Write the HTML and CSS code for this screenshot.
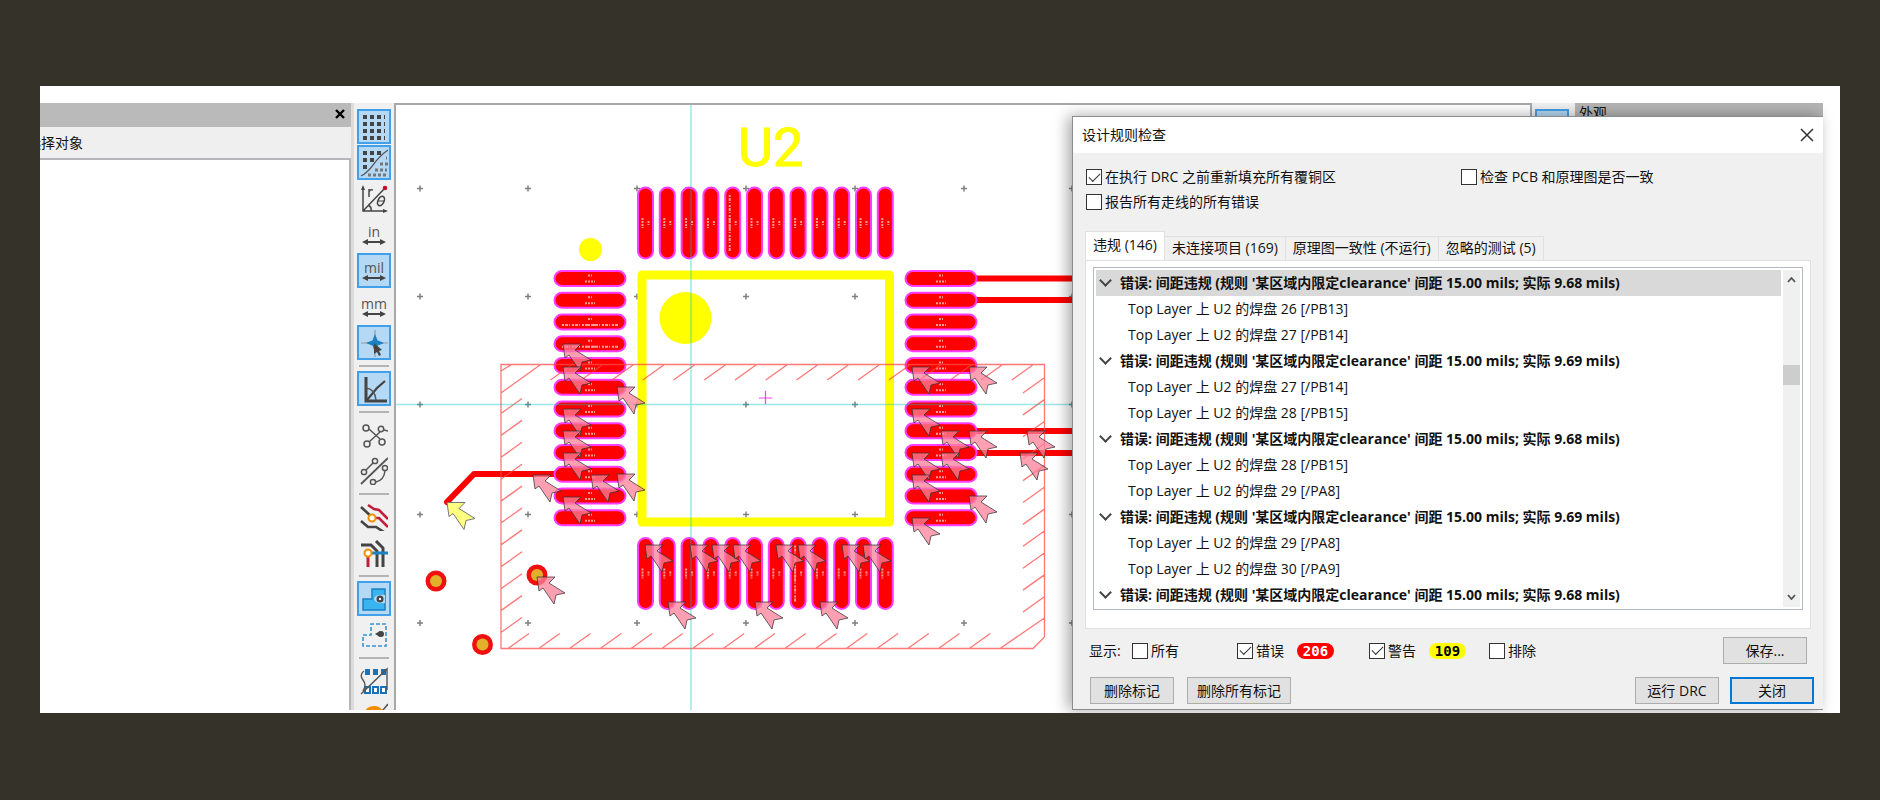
FILE: index.html
```html
<!DOCTYPE html>
<html lang="zh-CN">
<head>
<meta charset="utf-8">
<title>设计规则检查</title>
<link rel="stylesheet" href="styles.css">
</head>
<body>
<main class="window">
  <aside class="panel">
    <header class="panel-head">
      <button class="panel-close" aria-label="关闭面板"><svg width="10" height="10" viewBox="0 0 10 10"><path d="M1 1l8 8M9 1l-8 8" stroke="#000" stroke-width="2.4"/></svg></button>
    </header>
    <div class="panel-sub"><span>选择对象</span></div>
    <div class="panel-list"></div>
  </aside>

  <nav class="toolbar" aria-label="工具">
    <button class="tool on" aria-label="网格"><svg viewBox="0 0 28 28"><path d="M3 4h22M3 11h22M3 18h22M3 25h22" stroke="#444" stroke-width="4" stroke-dasharray="4 3"/></svg></button>
    <button class="tool on" aria-label="网格覆盖"><svg viewBox="0 0 28 28"><path d="M3 4h19M3 11h12M3 18h5" stroke="#444" stroke-width="4" stroke-dasharray="4 3"/><path d="M26 9h1M20 15h8M15 21h12M8 26h20" stroke="#777" stroke-width="3" stroke-dasharray="3 2"/><path d="M1 27C14 20 12 12 28 1" fill="none" stroke="#555" stroke-width="1.3"/></svg></button>
    <button class="tool" aria-label="极坐标"><svg viewBox="0 0 28 28"><path d="M3 2v24h23M3 26L25 3M8 20q4 2 3 6" fill="none" stroke="#444" stroke-width="1.5"/><path d="M3 0l2 5H1zM28 26l-5-2v4z" fill="#444"/><path d="M9 12V4M9 7q1-3 4-2" fill="none" stroke="#555" stroke-width="1.6"/><ellipse cx="21" cy="16" rx="3" ry="5" transform="rotate(25 21 16)" fill="none" stroke="#444" stroke-width="1.6"/><path d="M18 16h6" stroke="#444"/><circle cx="25" cy="3" r="2.3" fill="#c8102e"/></svg></button>
    <button class="tool" aria-label="英寸"><span class="unit">in</span><svg class="arrow" viewBox="0 0 24 6"><path d="M3 3h18" stroke="#444" stroke-width="2"/><path d="M0 3l6-3v6zM24 3l-6-3v6z" fill="#444"/></svg></button>
    <button class="tool on" aria-label="密耳"><span class="unit">mil</span><svg class="arrow" viewBox="0 0 24 6"><path d="M3 3h18" stroke="#444" stroke-width="2"/><path d="M0 3l6-3v6zM24 3l-6-3v6z" fill="#444"/></svg></button>
    <button class="tool" aria-label="毫米"><span class="unit">mm</span><svg class="arrow" viewBox="0 0 24 6"><path d="M3 3h18" stroke="#444" stroke-width="2"/><path d="M0 3l6-3v6zM24 3l-6-3v6z" fill="#444"/></svg></button>
    <button class="tool on" aria-label="光标"><svg viewBox="0 0 28 28"><path d="M1 14h27M15 1v27" stroke="#999" stroke-width="1.2"/><path d="M15 7l2 5 5 2-5 2-2 5-2-5-5-2 5-2z" fill="#1a81c4" stroke="#1a81c4" stroke-width="1.5"/><path d="M14 14l8 7-3 1 2 4-2 1-2-4-3 2z" fill="#444"/></svg></button>
    <hr class="sep">
    <button class="tool on" aria-label="角度限制"><svg viewBox="0 0 28 28"><path d="M6 2v24h21" fill="none" stroke="#444" stroke-width="3"/><path d="M7 25L17 13l8-7" fill="none" stroke="#444" stroke-width="2.2"/><path d="M6 13q9 1 10 12" fill="none" stroke="#555" stroke-width="1.4"/></svg></button>
    <hr class="sep">
    <button class="tool" aria-label="飞线"><svg viewBox="0 0 28 28" fill="none" stroke="#555" stroke-width="1.5"><circle cx="6" cy="7" r="3"/><circle cx="21" cy="8" r="2.7"/><circle cx="7" cy="23" r="3"/><circle cx="22" cy="21" r="3"/><path d="M9 8l11 10M9 21L20 11M24 9l4 1"/></svg></button>
    <button class="tool" aria-label="弯曲飞线"><svg viewBox="0 0 28 28" fill="none" stroke="#555" stroke-width="1.5"><path d="M1 27L28 1" stroke-width="1.8"/><circle cx="15" cy="4" r="2.6"/><circle cx="4" cy="15" r="2.6"/><path d="M6 13l7-7M16 25q8-2 9-11"/><circle cx="13" cy="25" r="2.6"/><circle cx="25" cy="11" r="2.6"/></svg></button>
    <hr class="sep">
    <button class="tool" aria-label="高亮网络"><svg viewBox="0 0 28 28" fill="none" stroke-width="2.6"><path d="M1 4l12 11M1 18l7 6h8l8 5" stroke="#444"/><path d="M8 2l6 4 5 1 9 9M13 15h6l9 9" stroke="#c0203c"/><circle cx="12" cy="15" r="3.5" fill="#fff" stroke="#f29100" stroke-width="2"/></svg></button>
    <button class="tool" aria-label="网络颜色"><svg viewBox="0 0 28 28" fill="none" stroke-width="3"><path d="M1 6h10l6 6v16M16 2l7 7v19" stroke="#444"/><path d="M9 14h19" stroke="#1a81c4"/><path d="M8 16v12" stroke="#c0203c"/><circle cx="8" cy="14" r="3.5" fill="#fff" stroke="#f29100" stroke-width="2"/></svg></button>
    <hr class="sep">
    <button class="tool on" aria-label="填充覆铜"><svg viewBox="0 0 28 28"><path d="M3 14h9V4h13v21H3z" fill="#39b4ee" stroke="#1a81c4" stroke-width="1.5"/><path d="M14 14q1-5 11-4v8q-10 1-11-4" fill="#b5daf5"/><circle cx="20" cy="14" r="3.5" fill="#444"/><circle cx="20" cy="14" r="1.2" fill="#fff"/></svg></button>
    <button class="tool" aria-label="覆铜轮廓"><svg viewBox="0 0 28 28"><path d="M3 14h8V3h15v22H3z" fill="none" stroke="#3994cf" stroke-width="1.6" stroke-dasharray="4 2"/><path d="M15 13l5-3v6z" fill="#444"/><circle cx="21" cy="13" r="3" fill="#444"/></svg></button>
    <hr class="sep">
    <button class="tool" aria-label="焊盘"><svg viewBox="0 0 28 28"><path d="M5 2h5v6H5zM13 2h5v6h-5zM21 2h5v6h-5z" fill="#1a72b8"/><path d="M5 20h5v6H5zM13 20h5v6h-5zM21 20h5v6h-5z" fill="#fff" stroke="#1a72b8" stroke-width="2"/><path d="M1 27L27 2v21M4 4q-5 4-1 9t0 11" fill="none" stroke="#555" stroke-width="1.4"/></svg></button>
    <button class="tool" aria-label="过孔"><svg viewBox="0 0 28 28"><circle cx="14" cy="14" r="11" fill="#f28c00"/><path d="M18 13L28 1" stroke="#555" stroke-width="1.5"/></svg></button>
  </nav>

  <section class="canvas" aria-label="PCB">
    <svg id="board" width="100%" height="100%">
      <defs>
        <path id="marker" d="M0 0L18 0 12 6 28 16 19 18 17 27 6 11 2 14Z" stroke-width="1"/>
        <g id="pad">
          <rect x="-35.5" y="-7.5" width="71" height="15" rx="7.5" fill="#f00" stroke="#ff3cff" stroke-width="2"/>
          <path d="M-2 -3h4M-5 3h10" stroke="#ff9a9a" stroke-width="2" stroke-dasharray="2 1"/>
        </g>
        <g id="pad-long">
          <use href="#pad"/>
          <path d="M-28 3h56" stroke="#ff9a9a" stroke-width="2" stroke-dasharray="2 1 3 1 1 2"/>
        </g>
        <path id="tick" d="M-3 0h6M0 -3v6" stroke="#808080" stroke-width="1.5"/>
        <g id="via"><circle r="10.5" fill="#f01010"/><circle r="6" fill="#e2b12c"/></g>
      </defs>
      <g transform="translate(-396 -105)">
        <g id="ticks"></g>
        <g fill="none" stroke="#f00" stroke-width="6" stroke-linecap="round" stroke-linejoin="round">
          <path d="M447 502L474 474H580M960 278.5H1080M960 300H1080M960 431H1080M960 453H1080"/>
        </g>
        <g id="pads"></g>
        <rect x="642" y="275" width="247.5" height="247" fill="none" stroke="#ff0" stroke-width="9" stroke-linejoin="round"/>
        <circle cx="685.5" cy="318" r="26" fill="#ff0"/>
        <circle cx="590.5" cy="249.5" r="11.5" fill="#ff0"/>
        <text class="refdes" x="738" y="166">U2</text>
        <use href="#via" x="436" y="581"/><use href="#via" x="482.5" y="644.5"/><use href="#via" x="537" y="575"/>
        <path id="zone" fill="none" stroke="#ff4a4a" stroke-opacity=".75" stroke-width="1.3"/>
        <path d="M691 105V720M396 404.5H1100" stroke="#00c4c4" stroke-opacity=".4" stroke-width="1.5"/>
        <path d="M759 398h13M765.5 391v13" stroke="#ff3cff" stroke-width="1.2"/>
        <g id="markers" fill="#ff8098" fill-opacity=".75" stroke="#333" stroke-opacity=".75"></g>
        <use href="#marker" x="447" y="502.5" fill="#ffff80" stroke="#777"/>
      </g>
    </svg>
  </section>

  <div class="toolbar right"><div class="tool on"></div></div>
  <aside class="appearance"><span>外观</span></aside>

  <section class="dialog" role="dialog" aria-labelledby="dlg-title">
    <header class="title-bar">
      <h1 id="dlg-title">设计规则检查</h1>
      <button class="dlg-close" aria-label="关闭对话框"><svg width="14" height="14" viewBox="0 0 14 14"><path d="M1 1l12 12M13 1L1 13" stroke="#333" stroke-width="1.5"/></svg></button>
    </header>
    <div class="options">
      <label class="check"><input type="checkbox" checked>在执行 DRC 之前重新填充所有覆铜区</label>
      <label class="check"><input type="checkbox">检查 PCB 和原理图是否一致</label>
      <label class="check"><input type="checkbox">报告所有走线的所有错误</label>
    </div>
    <div class="tabs" role="tablist">
      <button class="tab active" role="tab">违规 (146)</button>
      <button class="tab" role="tab">未连接项目 (169)</button>
      <button class="tab" role="tab">原理图一致性 (不运行)</button>
      <button class="tab" role="tab">忽略的测试 (5)</button>
    </div>
    <div class="page">
      <div class="list">
        <ul class="rows">
          <li class="row head selected">错误: 间距违规 (规则 '某区域内限定clearance' 间距 15.00 mils; 实际 9.68 mils)</li>
          <li class="row">Top Layer 上 U2 的焊盘 26 [/PB13]</li>
          <li class="row">Top Layer 上 U2 的焊盘 27 [/PB14]</li>
          <li class="row head">错误: 间距违规 (规则 '某区域内限定clearance' 间距 15.00 mils; 实际 9.69 mils)</li>
          <li class="row">Top Layer 上 U2 的焊盘 27 [/PB14]</li>
          <li class="row">Top Layer 上 U2 的焊盘 28 [/PB15]</li>
          <li class="row head">错误: 间距违规 (规则 '某区域内限定clearance' 间距 15.00 mils; 实际 9.68 mils)</li>
          <li class="row">Top Layer 上 U2 的焊盘 28 [/PB15]</li>
          <li class="row">Top Layer 上 U2 的焊盘 29 [/PA8]</li>
          <li class="row head">错误: 间距违规 (规则 '某区域内限定clearance' 间距 15.00 mils; 实际 9.69 mils)</li>
          <li class="row">Top Layer 上 U2 的焊盘 29 [/PA8]</li>
          <li class="row">Top Layer 上 U2 的焊盘 30 [/PA9]</li>
          <li class="row head">错误: 间距违规 (规则 '某区域内限定clearance' 间距 15.00 mils; 实际 9.68 mils)</li>
        </ul>
        <div class="scrollbar">
          <button aria-label="向上滚动"><svg width="9" height="6" viewBox="0 0 9 6"><path d="M1 5l3.5-4L8 5" fill="none" stroke="#555" stroke-width="1.8"/></svg></button>
          <div class="track"><div class="thumb"></div></div>
          <button aria-label="向下滚动"><svg width="9" height="6" viewBox="0 0 9 6"><path d="M1 1l3.5 4L8 1" fill="none" stroke="#555" stroke-width="1.8"/></svg></button>
        </div>
      </div>
    </div>
    <div class="filters">
      <span>显示:</span>
      <div><label class="check"><input type="checkbox">所有</label></div>
      <div><label class="check"><input type="checkbox" checked>错误</label><span class="badge red">206</span></div>
      <div><label class="check"><input type="checkbox" checked>警告</label><span class="badge yellow">109</span></div>
      <div><label class="check"><input type="checkbox">排除</label></div>
      <button class="btn">保存...</button>
    </div>
    <footer class="actions">
      <button class="btn">删除标记</button>
      <button class="btn wide">删除所有标记</button>
      <button class="btn run">运行 DRC</button>
      <button class="btn primary">关闭</button>
    </footer>
  </section>
</main>
<script src="board.js"></script>
</body>
</html>
```

FILE: styles.css
```css
* { box-sizing: border-box; }
body {
  margin: 0;
  height: 100vh;
  min-height: 640px;
  padding: 86px 40px 87px;
  background: #35322a;
  color: #111;
  font: 14px/20px "Open Sans", "Noto Sans CJK SC", sans-serif;
}
button, input { font: inherit; color: inherit; margin: 0; }
button { padding: 0; border: 0; background: none; }

.window {
  display: grid;
  grid-template: minmax(0, 1fr) / 311px 43px minmax(0, 1fr) 43px 248px;
  height: 100%;
  padding: 17px 17px 3px 0;
  background: #fff;
  overflow: hidden;
}

/* left panel */
.panel {
  grid-area: 1 / 1;
  display: flex;
  flex-direction: column;
  background: #efefef;
}
.panel-head {
  display: flex;
  align-items: center;
  justify-content: flex-end;
  height: 24px;
  padding: 0 6px 2px;
  background: #bababa;
}
.panel-close { display: flex; }
.panel-sub {
  display: flex;
  height: 31px;
  align-items: center;
  overflow: hidden;
}
.panel-sub span { margin-left: -13px; }
.panel-list {
  flex: 1;
  border: solid #b4b6ba;
  border-width: 2px 2px 0 0;
  background: #fff;
}

/* tool strips */
.toolbar {
  grid-area: 1 / 2;
  display: flex;
  flex-direction: column;
  align-items: center;
  gap: 1px;
  padding: 6px 0 0;
  border-left: 3px solid #dcdcdc;
  background: #f0f0f0;
  overflow: hidden;
}
.toolbar.right { grid-area: 1 / 4; border-left: 0; padding-right: 4px; }
.tool {
  flex: none;
  display: flex;
  flex-direction: column;
  align-items: center;
  justify-content: center;
  width: 34px;
  height: 35px;
  border: 2px solid transparent;
}
.tool.on { border-color: #42a0ea; background: #b5d8f4; }
.tool svg { width: 28px; height: 28px; }
.tool .arrow { width: 24px; height: 6px; }
.unit { font-size: 14px; line-height: 14px; color: #555; }
.sep {
  flex: none;
  width: 30px;
  height: 2px;
  margin: 4px 0 3px;
  border: 0;
  background: #b4b4b4;
}

/* board */
.canvas {
  grid-area: 1 / 3;
  border: 2px solid #a8a8a8;
  border-bottom: 0;
  background: #fff;
  overflow: hidden;
}
.canvas svg { display: block; }
.refdes {
  font: 400 54px Roboto, sans-serif;
  fill: #ff0;
  stroke: #ff0;
  stroke-width: 1px;
  stroke-linejoin: round;
}

.appearance {
  grid-area: 1 / 5;
  padding-left: 4px;
  background: #b4b4b4;
}

/* dialog */
.dialog {
  grid-area: 1 / 3 / 2 / 6;
  justify-self: end;
  z-index: 1;
  display: flex;
  flex-direction: column;
  width: 751px;
  margin-top: 13px;
  border: solid #8c8c8c;
  border-width: 1px 0 1px 1px;
  background: #f0f0f0;
  box-shadow: -4px 0 14px rgba(0, 0, 0, .35);
}
.title-bar {
  display: flex;
  align-items: center;
  justify-content: space-between;
  height: 36px;
  padding: 0 9px;
  background: #fff;
}
h1 { margin: 0; font-size: 14px; font-weight: 400; }
.dlg-close { display: flex; }
.options {
  display: grid;
  grid-template-columns: 375px 1fr;
  row-gap: 9px;
  padding: 16px 13px 21px;
}
.check {
  display: flex;
  align-items: center;
  gap: 3px;
  height: 16px;
  white-space: nowrap;
}
.check input {
  flex: none;
  display: grid;
  place-items: center;
  width: 16px;
  height: 16px;
  appearance: none;
  border: 1px solid #333;
  background: #fff;
}
.check input:checked::before {
  content: "";
  width: 10px;
  height: 5px;
  margin-bottom: 3px;
  border: solid #333;
  border-width: 0 0 1px 1px;
  rotate: -45deg;
}
.tabs { display: flex; align-items: flex-end; padding: 0 12px; }
.tab {
  height: 24px;
  padding: 0 7px 2px;
  border: solid #e0e0e0;
  border-width: 1px 1px 0 0;
  white-space: nowrap;
}
.tab.active {
  height: 30px;
  margin-bottom: -1px;
  padding-bottom: 4px;
  border-left-width: 1px;
  background: #fff;
}
.page {
  flex: 1;
  display: flex;
  min-height: 0;
  margin: 0 12px;
  padding: 6px 7px 18px;
  border: 1px solid #e0e0e0;
  background: #fff;
}
.list {
  flex: 1;
  display: flex;
  padding: 2px;
  border: 1px solid #b4b8c0;
  overflow: hidden;
}
.rows { flex: 1; margin: 0; padding: 0; list-style: none; }
.row {
  display: flex;
  align-items: center;
  height: 26px;
  padding-left: 32px;
  white-space: nowrap;
}
.row.head { padding-left: 4px; gap: 10px; font-weight: 700; }
.row.head::before {
  content: "";
  width: 7px;
  height: 7px;
  margin: 0 0 5px 1px;
  border: solid #444;
  border-width: 0 2px 2px 0;
  rotate: 45deg;
}
.selected { background: #d9d9d9; }
.scrollbar {
  display: flex;
  flex-direction: column;
  width: 17px;
  margin-left: 2px;
  background: #f0f0f0;
}
.scrollbar button { display: grid; place-items: center; height: 20px; }
.track { flex: 1; padding-top: 75px; }
.thumb { height: 20px; background: #cdcdcd; }

.filters {
  display: grid;
  grid-template-columns: 43px 105px 132px 120px 1fr auto;
  align-items: center;
  padding: 8px 16px 0;
}
.filters div { display: flex; align-items: center; gap: 13px; }
.badge {
  width: 37px;
  height: 16px;
  border-radius: 8px;
  font: 700 14px/16px "DejaVu Sans Mono", monospace;
  text-align: center;
}
.red { background: #f00; color: #fff; }
.yellow { background: #ff0; color: #000; }
.btn {
  width: 84px;
  height: 27px;
  border: 1px solid #adadad;
  background: #e1e1e1;
}
.actions { display: flex; gap: 11px; padding: 13px 9px 5px 17px; }
.wide { width: 104px; margin-left: 2px; }
.run { margin-left: auto; }
.primary { border: 2px solid #0078d7; }
```

FILE: board.js
```js
const NS = 'http://www.w3.org/2000/svg';
const put = (parent, ref, x, y, turn) => {
  const u = document.createElementNS(NS, 'use');
  u.setAttribute('href', ref);
  u.setAttribute('transform', `translate(${x} ${y})` + (turn ? ' rotate(90)' : ''));
  document.getElementById(parent).append(u);
};

// grid ticks
for (const x of [420, 528, 637, 746, 855, 964, 1072])
  for (const y of [188.5, 296.5, 404.5, 514.5, 623]) put('ticks', '#tick', x, y);

// twelve pads on each side of the package
for (let i = 0; i < 12; i++) {
  put('pads', i === 2 || i === 3 ? '#pad-long' : '#pad', 590, 278.5 + i * 21.75);
  put('pads', '#pad', 941, 278.5 + i * 21.75);
  put('pads', i === 4 ? '#pad-long' : '#pad', 645.5 + i * 21.8, 223, true);
  put('pads', i === 7 ? '#pad-long' : '#pad', 645.5 + i * 21.8, 573.5, true);
}

// rule area outline with hatched edge
let d = 'M501 364.5H1044.5V637L1033 648.5H501ZM501 371L511 365M501 393L540 365M1000 648.5L1044.5 618';
for (let x = 550.5; x < 1020; x += 30.75) d += `M${x} 380l21 -15`;
for (let x = 508; x < 985; x += 30.75) d += `M${x} 648.5l21 -15`;
for (let y = 413.5; y < 640; y += 21.9) d += `M501 ${y}l21 -15`;
for (let y = 393; y < 615; y += 21.9) d += `M1023 ${y}l21 -15`;
document.getElementById('zone').setAttribute('d', d);

// violation markers
const spots = [
  [563, 344], [563, 367], [617, 387], [563, 409], [563, 431], [563, 453], [591, 475], [617, 474],
  [563, 497], [533, 475], [537, 577],
  [645, 545], [690, 545], [712, 545], [733, 545], [776, 545], [798, 545], [842, 545], [863, 545],
  [668, 602], [755, 602], [820, 602],
  [912, 367], [969, 367], [912, 409], [941, 431], [969, 431], [912, 453], [941, 453],
  [1027, 431], [1020, 453], [912, 475], [969, 496], [912, 518]
];
for (const [x, y] of spots) put('markers', '#marker', x, y);
```
